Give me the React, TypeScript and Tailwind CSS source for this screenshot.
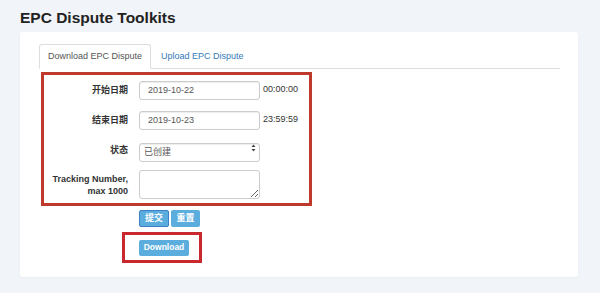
import { useState } from 'react';

function FormRow({ label, children }: { label: React.ReactNode; children: React.ReactNode }) {
  return (
    <div className="flex h-[30px] items-center">
      <div className="w-[84px] text-right text-[9px] font-bold leading-[12px] text-[#333]">{label}</div>
      <div className="ml-[11px] flex items-center">{children}</div>
    </div>
  );
}

export default function App() {
  const [tab, setTab] = useState<'download' | 'upload'>('download');
  const [start, setStart] = useState('2019-10-22');
  const [end, setEnd] = useState('2019-10-23');
  const [status, setStatus] = useState('created');
  const [tracking, setTracking] = useState('');

  const inputCls =
    'h-[19px] w-[121px] rounded-[3px] border border-[#ccc] bg-white px-[8px] text-[9px] text-[#555] shadow-[inset_0_1px_1px_rgba(0,0,0,0.075)] outline-none';

  const tabCls = (active: boolean) =>
    `-mb-px h-[25px] rounded-t-[3px] px-[8px] text-[9px] ${
      active ? 'border border-[#ddd] border-b-white bg-white text-[#555]' : 'text-[#337ab7]'
    }`;

  return (
    <div
      className="min-h-[293px] w-[600px] bg-[#f1f4f8] pl-[20px] pr-[22px] pt-[8px] pb-[16px]"
      style={{ fontFamily: '"Liberation Sans", Arial, "Noto Sans CJK SC", sans-serif' }}
    >
      <h1 className="h-[24px] text-[15.5px] font-bold leading-[20px] text-[#222]">EPC Dispute Toolkits</h1>

      <div className="h-[245px] rounded-[3px] bg-white pl-[19px] pr-[18px] pt-[12px] shadow-[0_1px_3px_rgba(0,0,0,0.04)]">
        <div className="flex h-[25px] border-b border-[#ddd]">
          <button type="button" onClick={() => setTab('download')} className={tabCls(tab === 'download')}>
            Download EPC Dispute
          </button>
          <button type="button" onClick={() => setTab('upload')} className={`ml-[2px] ${tabCls(tab === 'upload')}`}>
            Upload EPC Dispute
          </button>
        </div>

        <div className="ml-[2px] mt-[3px] w-[271px] border-[3px] border-[#bf3a2c]">
          <FormRow label="开始日期">
            <input className={inputCls} value={start} onChange={(e) => setStart(e.target.value)} />
            <span className="ml-[3px] text-[9px] text-[#333]">00:00:00</span>
          </FormRow>
          <FormRow label="结束日期">
            <input className={inputCls} value={end} onChange={(e) => setEnd(e.target.value)} />
            <span className="ml-[3px] text-[9px] text-[#333]">23:59:59</span>
          </FormRow>
          <FormRow label="状态">
            <div className="relative">
              <select
                className={`${inputCls} appearance-none pl-[4px]`}
                value={status}
                onChange={(e) => setStatus(e.target.value)}
              >
                <option value="created">已创建</option>
                <option value="done">已完成</option>
              </select>
              <svg className="pointer-events-none absolute right-[4px] top-[6px]" width="5" height="8" viewBox="0 0 5 8">
                <path d="M2.5 0.5 L4.5 3 H0.5 Z" fill="#444" />
                <path d="M2.5 7.5 L4.5 5 H0.5 Z" fill="#444" />
              </svg>
            </div>
          </FormRow>
          <div className="flex h-[38px] items-center pb-[4px] pt-[5px]">
            <div className="w-[84px] text-right text-[9px] font-bold leading-[12px] text-[#333]">
              Tracking Number,
              <br />
              max 1000
            </div>
            <textarea
              className="ml-[11px] h-[29px] w-[121px] rounded-[3px] border border-[#ccc] px-[6px] text-[9px] text-[#555] outline-none"
              value={tracking}
              onChange={(e) => setTracking(e.target.value)}
            />
          </div>
        </div>

        <div className="ml-[100px] mt-[4px] flex gap-[2px]">
          <button
            type="button"
            className="h-[17px] w-[30px] rounded-[2px] border border-[#3f7fc7] bg-[#5badde] text-[9px] font-bold text-white"
          >
            提交
          </button>
          <button type="button" className="h-[17px] w-[29px] rounded-[2px] bg-[#5badde] text-[9px] font-bold text-white">
            重置
          </button>
        </div>

        <div className="ml-[83px] mt-[5px] flex h-[31px] w-[80px] items-center border-[3px] border-[#c8282e] pl-[14px]">
          <button type="button" className="h-[16px] w-[50px] rounded-[2px] bg-[#5badde] text-[8.5px] font-bold text-white">
            Download
          </button>
        </div>
      </div>
    </div>
  );
}
